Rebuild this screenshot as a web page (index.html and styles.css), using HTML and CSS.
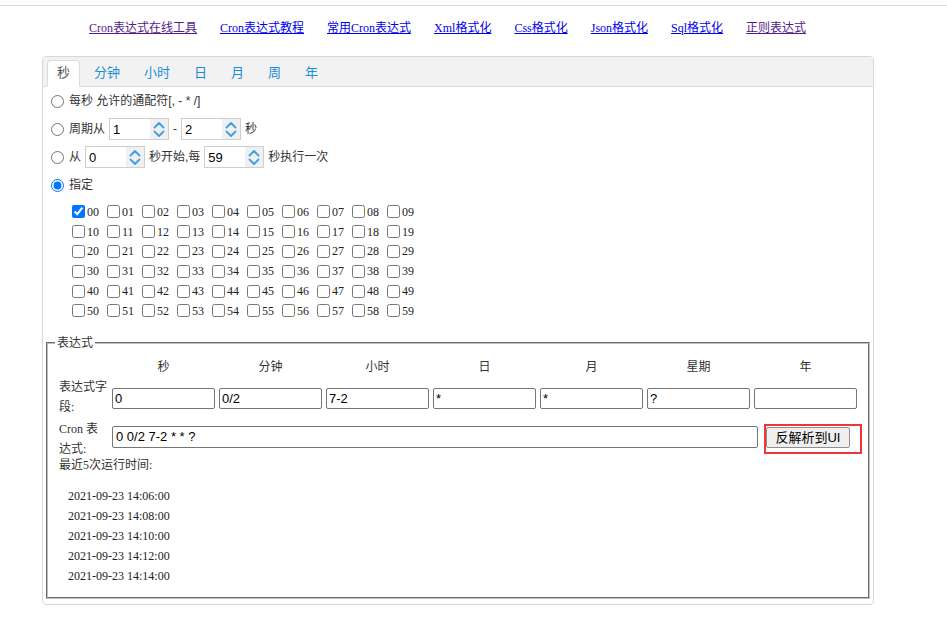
FILE: index.html
```html
<!DOCTYPE html>
<html lang="zh-CN">
<head>
<meta charset="utf-8">
<title>Cron表达式在线工具</title>
<link rel="stylesheet" href="styles.css">
</head>
<body>
<div class="topline"></div>
<nav class="nav">
  <a class="visited" href="#">Cron表达式在线工具</a>
  <a href="#">Cron表达式教程</a>
  <a href="#">常用Cron表达式</a>
  <a href="#">Xml格式化</a>
  <a href="#">Css格式化</a>
  <a href="#">Json格式化</a>
  <a href="#">Sql格式化</a>
  <a class="visited" href="#">正则表达式</a>
</nav>
<div class="panel">
  <ul class="tabs">
    <li class="tab active">秒</li>
    <li class="tab">分钟</li>
    <li class="tab">小时</li>
    <li class="tab">日</li>
    <li class="tab">月</li>
    <li class="tab">周</li>
    <li class="tab">年</li>
  </ul>
  <div class="tab-body">
    <div class="opt"><input type="radio" name="second">每秒 允许的通配符[, - * /]</div>
    <div class="opt"><input type="radio" name="second">周期从<span class="spin"><input type="text" value="1"><span class="spin-btns"><svg width="12" height="8" viewBox="0 0 12 8"><polyline points="1.5,6.5 6,2 10.5,6.5" /></svg><svg width="12" height="8" viewBox="0 0 12 8"><polyline points="1.5,1.5 6,6 10.5,1.5" /></svg></span></span>-<span class="spin"><input type="text" value="2"><span class="spin-btns"><svg width="12" height="8" viewBox="0 0 12 8"><polyline points="1.5,6.5 6,2 10.5,6.5" /></svg><svg width="12" height="8" viewBox="0 0 12 8"><polyline points="1.5,1.5 6,6 10.5,1.5" /></svg></span></span>秒</div>
    <div class="opt"><input type="radio" name="second">从<span class="spin"><input type="text" value="0"><span class="spin-btns"><svg width="12" height="8" viewBox="0 0 12 8"><polyline points="1.5,6.5 6,2 10.5,6.5" /></svg><svg width="12" height="8" viewBox="0 0 12 8"><polyline points="1.5,1.5 6,6 10.5,1.5" /></svg></span></span>秒开始,每<span class="spin"><input type="text" value="59"><span class="spin-btns"><svg width="12" height="8" viewBox="0 0 12 8"><polyline points="1.5,6.5 6,2 10.5,6.5" /></svg><svg width="12" height="8" viewBox="0 0 12 8"><polyline points="1.5,1.5 6,6 10.5,1.5" /></svg></span></span>秒执行一次</div>
    <div class="opt"><input type="radio" name="second" checked>指定</div>
    <div class="checks">
      <label class="chk"><input type="checkbox" checked>00</label><label class="chk"><input type="checkbox">01</label><label class="chk"><input type="checkbox">02</label><label class="chk"><input type="checkbox">03</label><label class="chk"><input type="checkbox">04</label><label class="chk"><input type="checkbox">05</label><label class="chk"><input type="checkbox">06</label><label class="chk"><input type="checkbox">07</label><label class="chk"><input type="checkbox">08</label><label class="chk"><input type="checkbox">09</label>
      <label class="chk"><input type="checkbox">10</label><label class="chk"><input type="checkbox">11</label><label class="chk"><input type="checkbox">12</label><label class="chk"><input type="checkbox">13</label><label class="chk"><input type="checkbox">14</label><label class="chk"><input type="checkbox">15</label><label class="chk"><input type="checkbox">16</label><label class="chk"><input type="checkbox">17</label><label class="chk"><input type="checkbox">18</label><label class="chk"><input type="checkbox">19</label>
      <label class="chk"><input type="checkbox">20</label><label class="chk"><input type="checkbox">21</label><label class="chk"><input type="checkbox">22</label><label class="chk"><input type="checkbox">23</label><label class="chk"><input type="checkbox">24</label><label class="chk"><input type="checkbox">25</label><label class="chk"><input type="checkbox">26</label><label class="chk"><input type="checkbox">27</label><label class="chk"><input type="checkbox">28</label><label class="chk"><input type="checkbox">29</label>
      <label class="chk"><input type="checkbox">30</label><label class="chk"><input type="checkbox">31</label><label class="chk"><input type="checkbox">32</label><label class="chk"><input type="checkbox">33</label><label class="chk"><input type="checkbox">34</label><label class="chk"><input type="checkbox">35</label><label class="chk"><input type="checkbox">36</label><label class="chk"><input type="checkbox">37</label><label class="chk"><input type="checkbox">38</label><label class="chk"><input type="checkbox">39</label>
      <label class="chk"><input type="checkbox">40</label><label class="chk"><input type="checkbox">41</label><label class="chk"><input type="checkbox">42</label><label class="chk"><input type="checkbox">43</label><label class="chk"><input type="checkbox">44</label><label class="chk"><input type="checkbox">45</label><label class="chk"><input type="checkbox">46</label><label class="chk"><input type="checkbox">47</label><label class="chk"><input type="checkbox">48</label><label class="chk"><input type="checkbox">49</label>
      <label class="chk"><input type="checkbox">50</label><label class="chk"><input type="checkbox">51</label><label class="chk"><input type="checkbox">52</label><label class="chk"><input type="checkbox">53</label><label class="chk"><input type="checkbox">54</label><label class="chk"><input type="checkbox">55</label><label class="chk"><input type="checkbox">56</label><label class="chk"><input type="checkbox">57</label><label class="chk"><input type="checkbox">58</label><label class="chk"><input type="checkbox">59</label>
    </div>
  </div>
  <fieldset class="expr">
    <legend>表达式</legend>
    <div class="expr-grid">
      <div></div>
      <div class="colh">秒</div>
      <div class="colh">分钟</div>
      <div class="colh">小时</div>
      <div class="colh">日</div>
      <div class="colh">月</div>
      <div class="colh">星期</div>
      <div class="colh">年</div>
      <div class="flabel">表达式字段:</div>
      <div><input class="fin" type="text" value="0"></div>
      <div><input class="fin" type="text" value="0/2"></div>
      <div><input class="fin" type="text" value="7-2"></div>
      <div><input class="fin" type="text" value="*"></div>
      <div><input class="fin" type="text" value="*"></div>
      <div><input class="fin" type="text" value="?"></div>
      <div><input class="fin" type="text" value=""></div>
    </div>
    <div class="cron-row">
      <div class="flabel">Cron 表达式:</div>
      <input class="cron-in" type="text" value="0 0/2 7-2 * * ?">
      <div class="mark"><button class="btn" type="button">反解析到UI</button></div>
    </div>
    <div class="recent">最近5次运行时间:</div>
    <ul class="times">
      <li>2021-09-23 14:06:00</li>
      <li>2021-09-23 14:08:00</li>
      <li>2021-09-23 14:10:00</li>
      <li>2021-09-23 14:12:00</li>
      <li>2021-09-23 14:14:00</li>
    </ul>
  </fieldset>
</div>
</body>
</html>
```

FILE: styles.css
```css
* { box-sizing: border-box; }

body {
  margin: 0;
  background: #fff;
  color: #333;
  font-family: "Liberation Serif", "Noto Sans CJK SC", serif;
  font-size: 12px;
  line-height: 1.5;
}

.topline {
  margin-top: 5px;
  border-top: 1px solid #dcdcdc;
}

.nav {
  display: flex;
  gap: 23px;
  padding-left: 89px;
  margin-top: 12px;
  height: 20px;
  line-height: 20px;
  font-size: 12px;
}

.nav a {
  color: #0000ee;
  text-decoration: underline;
  white-space: nowrap;
}

.nav a.visited { color: #551a8b; }

.panel {
  margin: 18px 0 0 42px;
  width: 832px;
  border: 1px solid #d8d8d8;
  border-radius: 4px;
  padding-bottom: 5px;
}

.tabs {
  list-style: none;
  margin: 0;
  padding: 3px 0 0 4px;
  display: flex;
  height: 30px;
  background: #f2f2f2;
  border-bottom: 1px solid #dcdcdc;
  border-radius: 3px 3px 0 0;
  font-family: "Liberation Sans", "Noto Sans CJK SC", sans-serif;
  font-size: 13px;
}

.tab {
  height: 27px;
  line-height: 24px;
  padding: 0 9px;
  margin-right: 4px;
  border: 1px solid transparent;
  border-radius: 4px 4px 0 0;
  color: #1a8fd6;
}

.tab.active {
  background: #fff;
  border-color: #dcdcdc;
  border-bottom-color: #fff;
  color: #555;
}

.tab-body {
  padding-left: 8px;
  font-family: "Liberation Sans", "Noto Sans CJK SC", sans-serif;
  font-size: 12px;
  color: #333;
}

.opt {
  display: flex;
  align-items: center;
  height: 28px;
  white-space: pre;
}

.opt input[type="radio"] {
  margin: 0 5px 0 0;
  width: 13px;
  height: 13px;
}

.spin {
  display: inline-flex;
  width: 60px;
  height: 22px;
  margin: 0 4px;
  border: 1px solid #cfcfcf;
  background: #fff;
}

.spin input {
  width: 40px;
  border: 0;
  outline: none;
  padding: 0 0 0 3px;
  font-family: "Liberation Sans", sans-serif;
  font-size: 13px;
  color: #000;
  background: transparent;
}

.spin-btns {
  width: 18px;
  margin-left: auto;
  background: #f0f0f0;
  display: flex;
  flex-direction: column;
  align-items: center;
  justify-content: space-around;
  padding: 1px 0;
}

.spin-btns svg {
  display: block;
  fill: none;
  stroke: #3d9fe3;
  stroke-width: 1.8;
  stroke-linecap: round;
  stroke-linejoin: round;
}

.checks {
  display: grid;
  grid-template-columns: repeat(10, 35px);
  grid-auto-rows: 19.8px;
  margin: 3px 0 0 17px;
  font-family: "Liberation Serif", serif;
  font-size: 12px;
  color: #222;
}

.chk {
  display: flex;
  align-items: center;
}

.chk input {
  margin: 0 2px 0 4px;
  width: 13px;
  height: 13px;
}

.expr {
  margin: 14px 3px 0 3px;
  min-width: 0;
  border: 2px groove #c0c0c0;
  padding: 0 6px 11px 11px;
}

.expr legend {
  padding: 0 2px;
  margin-left: -4px;
  line-height: 16px;
  font-family: "Liberation Sans", "Noto Sans CJK SC", sans-serif;
  font-size: 12px;
  color: #333;
}

.expr-grid {
  display: grid;
  grid-template-columns: 51px repeat(7, 107px);
  margin-top: 6px;
}

.colh {
  height: 20px;
  line-height: 20px;
  text-align: center;
}

.flabel {
  flex: none;
  width: 51px;
  height: 40px;
  line-height: 20px;
  color: #333;
}

.fin {
  display: block;
  margin: 11px 0 0 2px;
  width: 103px;
  height: 21px;
  border: 1px solid #767676;
  border-radius: 2px;
  padding: 0 2px;
  font-family: "Liberation Sans", sans-serif;
  font-size: 13px;
  color: #000;
}

.cron-row {
  display: flex;
  align-items: flex-start;
  margin-top: 2px;
  height: 38px;
}

.cron-row .flabel {
  height: 38px;
  padding-right: 4px;
}

.cron-in {
  flex: none;
  margin: 7px 0 0 2px;
  width: 646px;
  height: 22px;
  border: 1px solid #767676;
  border-radius: 2px;
  padding: 0 3px;
  font-family: "Liberation Sans", sans-serif;
  font-size: 13px;
  color: #000;
}

.mark {
  flex: none;
  margin: 5px 0 0 6px;
  border: 2px solid #ef3535;
  padding: 1px 10px 4px 0;
  height: 30px;
}

.btn {
  display: block;
  width: 84px;
  height: 21px;
  padding: 0;
  background: #efefef;
  border: 1px solid #8f8f8f;
  border-radius: 2px;
  font-family: "Liberation Sans", "Noto Sans CJK SC", sans-serif;
  font-size: 13px;
  line-height: 19px;
  color: #000;
}

.recent {
  height: 16px;
  line-height: 16px;
}

.times {
  list-style: none;
  margin: 13px 0 0 0;
  padding: 0 0 0 9px;
  line-height: 20px;
  color: #222;
}
```
